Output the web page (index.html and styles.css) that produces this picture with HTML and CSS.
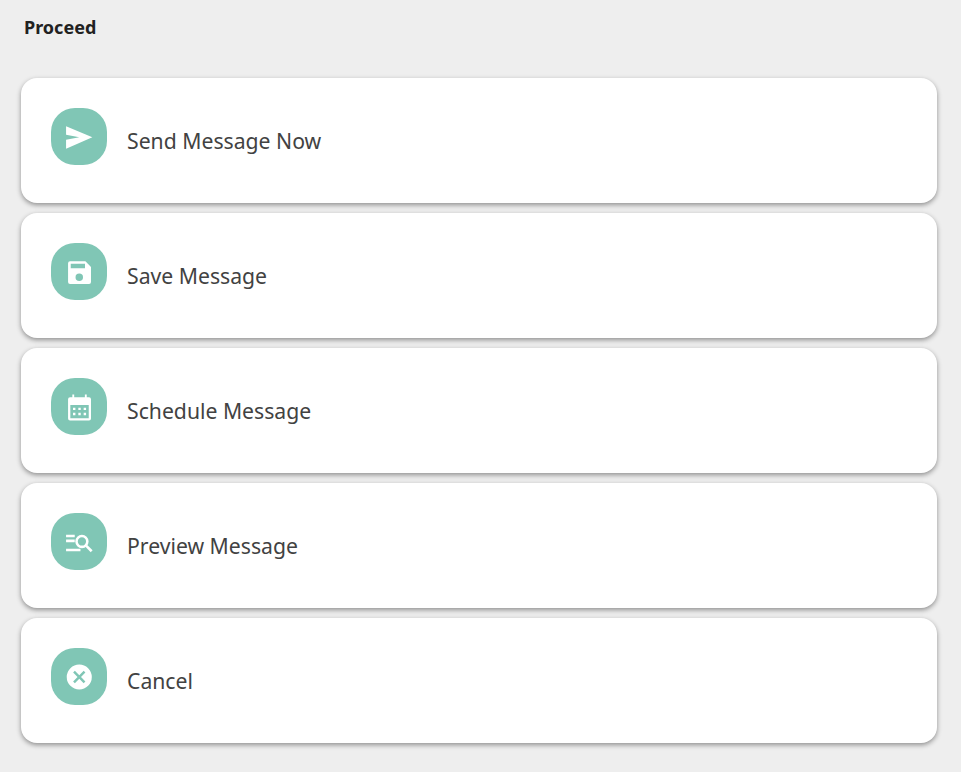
FILE: index.html
```html
<!DOCTYPE html>
<html lang="en">
<head>
  <meta charset="UTF-8">
  <meta name="viewport" content="width=device-width, initial-scale=1.0">
  <title>Proceed</title>
  <link rel="stylesheet" href="styles.css">
</head>
<body>

  <h1 class="title">Proceed</h1>

  <div class="actions">
    <a class="action">
      <span class="icon">
        <svg viewBox="0 0 24 24" width="32" height="32"><path d="M2.300 3.900 22 12.200 2.300 20.900v-6.800L12.200 12.200 2.300 10.300z"/></svg>
      </span>
      <span class="label">Send Message Now</span>
    </a>

    <a class="action">
      <span class="icon">
        <svg viewBox="0 0 24 24" width="32" height="32"><path fill-rule="evenodd" d="M5.300 4H16.800L21 8.200V19.500A1.500 1.500 0 0 1 19.500 21H5.300A1.500 1.500 0 0 1 3.800 19.500V5.500A1.500 1.500 0 0 1 5.300 4zM5.800 5.900v3.300h10.700V5.900zM12.200 13.100a2.800 2.800 0 1 0 0 5.600 2.800 2.800 0 0 0 0-5.600z"/></svg>
      </span>
      <span class="label">Save Message</span>
    </a>

    <a class="action">
      <span class="icon">
        <svg viewBox="0 0 24 24" width="32" height="32"><path fill-rule="evenodd" d="M7 2.600h1.400V4.700h8V2.600h1.400V4.700H19.500A1.500 1.500 0 0 1 21 6.200V20.600A1.500 1.500 0 0 1 19.500 22.100H5.300A1.500 1.500 0 0 1 3.800 20.600V6.200A1.500 1.500 0 0 1 5.300 4.700H7zM5.500 10.500v9.900H19.300V10.500zM7.500 12.500h1.800v1.800H7.500zM11.500 12.500h1.800v1.800H11.500zM15.500 12.500h1.800v1.800H15.500zM7.500 16.300h1.800v1.800H7.500zM11.500 16.300h1.800v1.800H11.500zM15.500 16.300h1.800v1.800H15.500z"/></svg>
      </span>
      <span class="label">Schedule Message</span>
    </a>

    <a class="action">
      <span class="icon">
        <svg viewBox="0 0 24 24" width="32" height="32"><path d="M2.300 6.600h6.500v1.900H2.300zM2.300 10.200h6.500v1.900H2.300zM2.300 17h10.800v1.900H2.300z"/><path fill-rule="evenodd" d="M14.200 6.600a5 5 0 1 1 0 10 5 5 0 0 1 0-10zm0 1.900a3.100 3.100 0 1 0 0 6.200 3.100 3.100 0 0 0 0-6.200z"/><path d="M16.800 15.600l1.400-1.400 4 4-1.400 1.400z"/></svg>
      </span>
      <span class="label">Preview Message</span>
    </a>

    <a class="action">
      <span class="icon">
        <svg viewBox="0 0 24 24" width="32" height="32"><path fill-rule="evenodd" d="M12.200 2.600a9.400 9.400 0 1 1 0 18.800 9.400 9.400 0 0 1 0-18.800zM8.900 7.300 7.600 8.600 10.900 12l-3.300 3.400 1.300 1.300 3.300-3.400 3.300 3.400 1.300-1.300L13.500 12l3.300-3.400-1.300-1.300-3.300 3.400z"/></svg>
      </span>
      <span class="label">Cancel</span>
    </a>
  </div>

</body>
</html>
```

FILE: styles.css
```css
html {
  height: 100%;
}

body {
  font-family: "Noto Sans", Arial, sans-serif;
  background-color: #eeeeee;
  min-height: 100%;
  box-sizing: border-box;
  margin: 0;
  padding: 16px 24px 29px 21px;
}

.title {
  font-size: 18px;
  font-weight: 700;
  line-height: 23px;
  color: #212121;
  margin: 0 0 39px 3px;
}

.actions {
  display: flex;
  flex-direction: column;
  gap: 10px;
}

.action {
  display: flex;
  align-items: flex-start;
  gap: 20px;
  height: 125px;
  box-sizing: border-box;
  padding: 30px;
  background-color: #ffffff;
  border-radius: 16px;
  box-shadow: 0 2px 5px rgba(0, 0, 0, 0.4);
}

.icon {
  display: flex;
  justify-content: center;
  align-items: center;
  flex: none;
  width: 56px;
  height: 57px;
  background-color: #80c6b5;
  border-radius: 24px;
}

.icon svg {
  fill: #ffffff;
}

.label {
  margin-top: 18px;
  font-size: 21.2px;
  line-height: 30px;
  color: #424242;
}
```
